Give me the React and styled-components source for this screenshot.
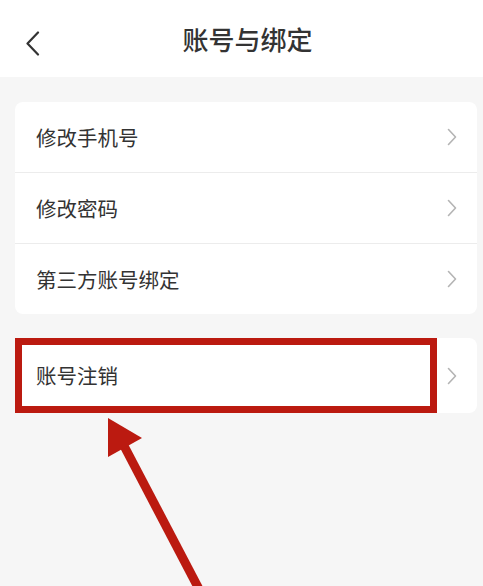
import React from 'react';
import styled, {createGlobalStyle} from 'styled-components';

const GlobalStyle = createGlobalStyle`
  html, body {
    margin: 0;
    padding: 0;
    background: #f6f6f6;
  }
  body {
    font-family: "Noto Sans CJK SC", "Noto Sans", sans-serif;
    color: #333;
  }
`;

const Page = styled.div`
  position: relative;
  min-height: 586px;
  background: #f6f6f6;
  overflow: hidden;
`;

const Header = styled.header`
  height: 77px;
  background: #fff;
  display: flex;
  align-items: center;
  justify-content: center;
  position: relative;
`;

const BackButton = styled.button`
  position: absolute;
  left: 22px;
  top: 29px;
  width: 20px;
  height: 29px;
  padding: 0;
  border: 0;
  background: none;
  display: flex;
  align-items: center;
  justify-content: center;
`;

const Title = styled.h1`
  margin: 0;
  padding-left: 12px;
  font-size: 26px;
  font-weight: 500;
  color: #333;
`;

const Body = styled.main`
  padding: 25px 6px 0 15px;
  display: flex;
  flex-direction: column;
  gap: 24px;
`;

const Card = styled.section`
  position: relative;
  background: #fff;
  border-radius: 8px;
`;

const Row = styled.div`
  height: ${p => p.$height || 70}px;
  display: flex;
  align-items: center;
  justify-content: space-between;
  padding: 0 20px 0 21px;
  border-top: ${p => (p.$first ? 'none' : '1px solid #ececec')};
  box-sizing: border-box;
`;

const Label = styled.span`
  font-size: 20.5px;
  color: #333;
  line-height: 1;
`;

const Highlight = styled.div`
  position: absolute;
  left: 0;
  top: 0;
  width: 422px;
  height: 75px;
  border: 7px solid #bb1a10;
  box-sizing: border-box;
  pointer-events: none;
`;

const ArrowLayer = styled.svg`
  position: absolute;
  left: 0;
  top: 0;
  pointer-events: none;
`;

function Chevron() {
  return (
    <svg width="10" height="18" viewBox="0 0 10 18">
      <path d="M1.5 1.5 L8.5 9 L1.5 16.5" fill="none" stroke="#b4b4b4" strokeWidth="1.6" strokeLinecap="round" strokeLinejoin="round" />
    </svg>
  );
}

const items = ['修改手机号', '修改密码', '第三方账号绑定'];

export default function App() {
  return (
    <Page>
      <GlobalStyle />
      <Header>
        <BackButton aria-label="返回">
          <svg width="15" height="25" viewBox="0 0 15 25">
            <path d="M13 1.5 L2.5 12.5 L13 23.5" fill="none" stroke="#333" strokeWidth="2.2" strokeLinecap="round" strokeLinejoin="round" />
          </svg>
        </BackButton>
        <Title>账号与绑定</Title>
      </Header>
      <Body>
        <Card>
          {items.map((label, i) => (
            <Row key={label} $first={i === 0} $height={i === 0 ? 70 : 71}>
              <Label>{label}</Label>
              <Chevron />
            </Row>
          ))}
        </Card>
        <Card>
          <Row $first $height={75}>
            <Label>账号注销</Label>
            <Chevron />
          </Row>
          <Highlight />
        </Card>
      </Body>
      <ArrowLayer width="483" height="586" viewBox="0 0 483 586">
        <line x1="122" y1="442" x2="211" y2="612" stroke="#bb1a10" strokeWidth="9" />
        <polygon points="108,418 142,438 108,457" fill="#bb1a10" />
      </ArrowLayer>
    </Page>
  );
}
